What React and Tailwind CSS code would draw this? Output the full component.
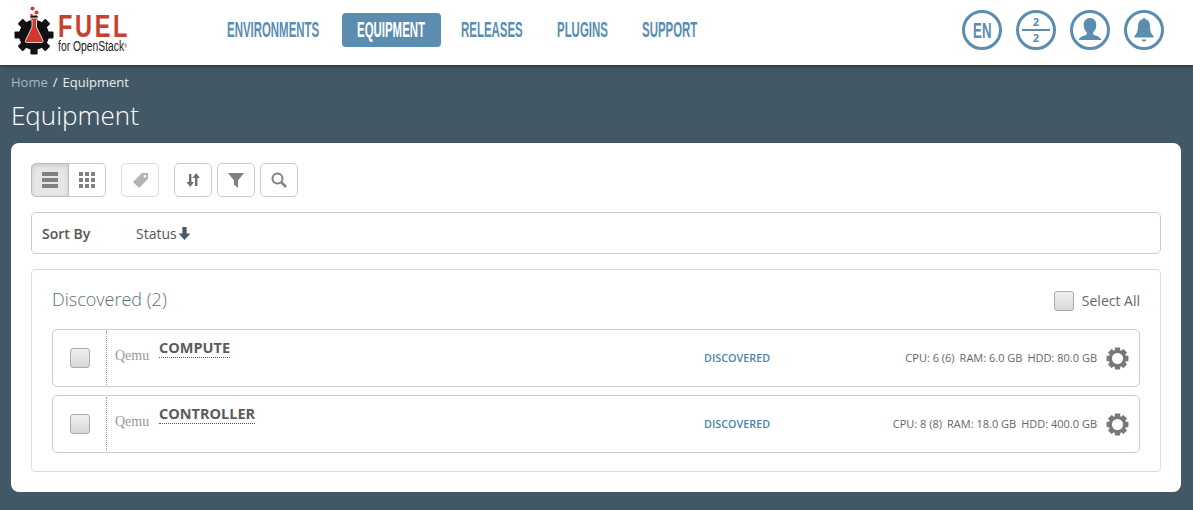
import React from "react";

const Gear = ({ className, fill = "#787878", hole = "#fff", teeth = 8 }) => {
  const t = [];
  for (let i = 0; i < teeth; i++) t.push(i * (360 / teeth));
  return (
    <svg viewBox="0 0 24 24" className={className}>
      {t.map((a) => (
        <rect key={a} x="9.2" y="0.6" width="5.6" height="5" rx="0.6" fill={fill} transform={`rotate(${a} 12 12)`} />
      ))}
      <circle cx="12" cy="12" r="9.2" fill={fill} />
      <circle cx="12" cy="12" r="5.8" fill={hole} />
    </svg>
  );
};

const Logo = () => (
  <div className="flex items-center w-[120px] h-[52px] relative">
    <svg viewBox="0 0 40 50" className="w-[40px] h-[50px] shrink-0">
      <g transform="translate(20 30)">
        {[0, 45, 90, 135, 180, 225, 270, 315].map((a) => (
          <rect key={a} x="-3.6" y="-19.5" width="7.2" height="7" rx="1" fill="#111" transform={`rotate(${a})`} />
        ))}
        <circle r="15" fill="#111" />
      </g>
      <path d="M16.5 13h7v2h-1v7l6.500 13.500c.5 1.200 0 2-1.200 2H12.700c-1.200 0-1.700-.8-1.200-2L18 22v-7h-1.500z" fill="#d0392b" stroke="#fff" strokeWidth="0.8" />
      <circle cx="18.500" cy="3.500" r="2" fill="#d0392b" />
      <circle cx="22.500" cy="7.500" r="2" fill="#d0392b" />
      <circle cx="17.500" cy="10" r="1.300" fill="#d0392b" />
    </svg>
    <div className="ml-[4px] mt-[6px] flex flex-col">
      <span className="font-['Liberation_Sans'] font-bold text-[#c9402e] text-[31px] leading-[25px] tracking-[3.5px] scale-x-[.76] origin-left inline-block">FUEL</span>
      <span className="font-['Liberation_Sans'] text-[#222] text-[14px] leading-[13px] mt-[1px] scale-x-[.74] origin-left inline-block whitespace-nowrap">for OpenStack<sup className="text-[5px]">®</sup></span>
    </div>
  </div>
);

const NavText = ({ children }) => (
  <span className="inline-block origin-left scale-x-[.52] whitespace-nowrap font-['Liberation_Sans'] font-bold text-[22px] leading-[34px]">{children}</span>
);

const Circle = ({ children }) => (
  <div className="w-[40px] h-[40px] rounded-full border-[3px] border-[#5b8db0] flex items-center justify-center text-[#5b8db0] overflow-hidden">
    {children}
  </div>
);

const ToolBtn = ({ children, className = "" }) => (
  <div className={`h-[34px] w-[38px] flex items-center justify-center border border-[#ccc] rounded-[5px] bg-white ${className}`}>{children}</div>
);

const Check = () => (
  <div className="w-[20px] h-[20px] rounded-[3px] border border-[#aaa] bg-gradient-to-b from-[#f0f0f0] to-[#d8d8d8] shrink-0" />
);

const Node = ({ name, cpu, ram, hdd }) => (
  <div className="h-[58px] border border-[#ccc] rounded-[5px] flex bg-white">
    <div className="w-[54px] flex items-center border-r border-dotted border-[#999] my-[1px] pl-[17px]">
      <Check />
    </div>
    <div className="w-[52px] pl-[8px] pt-[18px] font-['Liberation_Serif'] text-[14px] leading-[16px] text-[#999]">Qemu</div>
    <div className="w-[545px] pt-[8px]">
      <span className="block w-fit text-[14.500px] leading-[19px] font-bold text-[#5c5c5c] border-b border-dotted border-[#555]">{name}</span>
    </div>
    <div className="flex-1 flex items-center text-[10.800px] font-semibold text-[#4b83aa]">DISCOVERED</div>
    <div className="flex items-center gap-[5px] text-[11px] text-[#666] pr-[9px]">
      <span>CPU: {cpu}</span>
      <span>RAM: {ram}</span>
      <span>HDD: {hdd}</span>
    </div>
    <div className="flex items-center pr-[10px]">
      <Gear className="w-[23px] h-[23px]" />
    </div>
  </div>
);

export default function App() {
  return (
    <div className="min-h-screen bg-[#425866] font-['Open_Sans',sans-serif]">
      <header className="h-[65px] bg-white flex items-center shadow-[0_1px_4px_rgba(0,0,0,0.5)] relative pl-[14px]">
        <div className="w-[203px] -mt-[5px]">
          <Logo />
        </div>
        <nav className="flex items-center text-[#5b8db0] -mt-[5px]">
          <div className="h-[34px] w-[125px] pl-[10px]"><NavText>ENVIRONMENTS</NavText></div>
          <div className="h-[34px] w-[99px] rounded-[4px] bg-[#5b8db0] text-white pl-[15px]"><NavText>EQUIPMENT</NavText></div>
          <div className="h-[34px] w-[116px] pl-[20px]"><NavText>RELEASES</NavText></div>
          <div className="h-[34px] w-[85px]"><NavText>PLUGINS</NavText></div>
          <div className="h-[34px] w-[80px]"><NavText>SUPPORT</NavText></div>
        </nav>
        <div className="ml-auto mr-[29px] flex gap-[14px] items-center -mt-[5px]">
          <Circle><span className="inline-block scale-x-[.6] font-['Liberation_Sans'] font-bold text-[22px]">EN</span></Circle>
          <Circle>
            <div className="flex flex-col items-center w-full font-['Open_Sans'] text-[11px] leading-[12px] font-bold">
              <span>2</span>
              <span className="w-[28px] h-[2px] bg-[#5b8db0] my-[1px]" />
              <span>2</span>
            </div>
          </Circle>
          <Circle>
            <svg viewBox="0 0 34 34" className="w-[34px] h-[34px]">
              <path d="M17 5c4 0 6.300 3 6.300 7 0 3-1.200 5.500-2.800 7-.6.600-.6 2.200.3 2.800 2.500 1.300 6.500 1.800 7.500 5.200H5.700c1-3.400 5-3.900 7.500-5.200.9-.6.900-2.200.3-2.800-1.600-1.500-2.800-4-2.800-7 0-4 2.300-7 6.300-7z" fill="#5b8db0" />
            </svg>
          </Circle>
          <Circle>
            <svg viewBox="0 0 34 34" className="w-[34px] h-[34px]">
              <path d="M17 5c1 0 1.500.6 1.500 1.300 3 .7 4.500 3.200 4.500 6.700 0 5 1 7.500 3.500 10v1.500h-19V23c2.500-2.500 3.500-5 3.500-10 0-3.500 1.500-6 4.500-6.700C15.500 5.600 16 5 17 5z" fill="#5b8db0" />
              <path d="M14.500 26.500h5c-.5 1.500-1.400 2-2.500 2s-2-.5-2.500-2z" fill="#5b8db0" />
            </svg>
          </Circle>
        </div>
      </header>

      <div className="px-[11px]">
        <div className="pt-[8px] text-[13px] leading-[18px] text-[#e6edf1]">
          <span className="text-[#a3bac9]">Home</span>
          <span className="mx-[5px]">/</span>
          <span>Equipment</span>
        </div>
        <h1 className="mt-[7px] text-[26px] leading-[34px] font-light text-white">Equipment</h1>

        <main className="mt-[11px] h-[349px] w-[1170px] rounded-[8px] bg-white px-[20px] pt-[20px]">
          <div className="flex items-center">
            <div className="flex">
              <div className="h-[34px] w-[38px] flex items-center justify-center border border-[#bbb] rounded-l-[5px] bg-[#e6e6e6] shadow-[inset_0_2px_4px_rgba(0,0,0,0.12)]">
                <div className="flex flex-col gap-[2px]">
                  <span className="block w-[16px] h-[4px] bg-[#808080]" />
                  <span className="block w-[16px] h-[4px] bg-[#808080]" />
                  <span className="block w-[16px] h-[4px] bg-[#808080]" />
                </div>
              </div>
              <div className="h-[34px] w-[37px] flex items-center justify-center border border-l-0 border-[#ccc] rounded-r-[5px] bg-white">
                <div className="grid grid-cols-3 gap-[2px]">
                  {Array.from({ length: 9 }).map((_, i) => (
                    <span key={i} className="block w-[4px] h-[4px] bg-[#808080]" />
                  ))}
                </div>
              </div>
            </div>
            <ToolBtn className="ml-[15px] border-[#ddd]">
              <svg viewBox="0 0 20 20" className="w-[19px] h-[19px]">
                <path d="M11.500 2.200 L17.800 2.200 L17.800 8.500 L8.500 17.800 L2.200 11.500 Z" fill="#b3b3b3" />
                <circle cx="14.600" cy="5.400" r="1.300" fill="#fff" />
              </svg>
            </ToolBtn>
            <ToolBtn className="ml-[15px]">
              <svg viewBox="0 0 16 16" className="w-[16px] h-[16px]" fill="#6e6e6e">
                <path d="M4 2h2.400v8H9l-3.800 5L1.500 10H4z" />
                <path d="M10 14h2.400V6H15l-3.800-5L7.500 6H10z" />
              </svg>
            </ToolBtn>
            <ToolBtn className="ml-[5px]">
              <svg viewBox="0 0 16 16" className="w-[16px] h-[16px]" fill="#808080">
                <path d="M0 1h16L10 8.500V16L6 12.500v-4z" />
              </svg>
            </ToolBtn>
            <ToolBtn className="ml-[5px]">
              <svg viewBox="0 0 16 16" className="w-[16px] h-[16px]" fill="none" stroke="#808080" strokeWidth="2">
                <circle cx="6.500" cy="6.500" r="5" />
                <path d="M10.200 10.200L15 15" strokeWidth="2.500" />
              </svg>
            </ToolBtn>
          </div>

          <div className="mt-[15px] h-[42px] border border-[#ccc] rounded-[5px] flex items-center pl-[10px] text-[14px] text-[#555]">
            <span className="w-[94px] font-semibold">Sort By</span>
            <span>Status</span>
            <svg viewBox="0 0 12 14" className="w-[13px] h-[15px] ml-[1px]" fill="#4a5a68">
              <path d="M4 1h4v6h3.500L6 13 .5 7H4z" />
            </svg>
          </div>

          <section className="mt-[15px] h-[203px] border border-[#ddd] rounded-[4px] px-[20px]">
            <div className="h-[59px] flex items-center justify-between">
              <span className="text-[18px] font-light text-[#5f6f7c] -mt-[1px]">Discovered (2)</span>
              <div className="flex items-center gap-[8px] text-[14px] text-[#666] mt-[2px]">
                <Check />
                <span>Select All</span>
              </div>
            </div>
            <div className="flex flex-col gap-[8px]">
              <Node name="COMPUTE" cpu="6 (6)" ram="6.0 GB" hdd="80.0 GB" />
              <Node name="CONTROLLER" cpu="8 (8)" ram="18.0 GB" hdd="400.0 GB" />
            </div>
          </section>
        </main>
      </div>
    </div>
  );
}
